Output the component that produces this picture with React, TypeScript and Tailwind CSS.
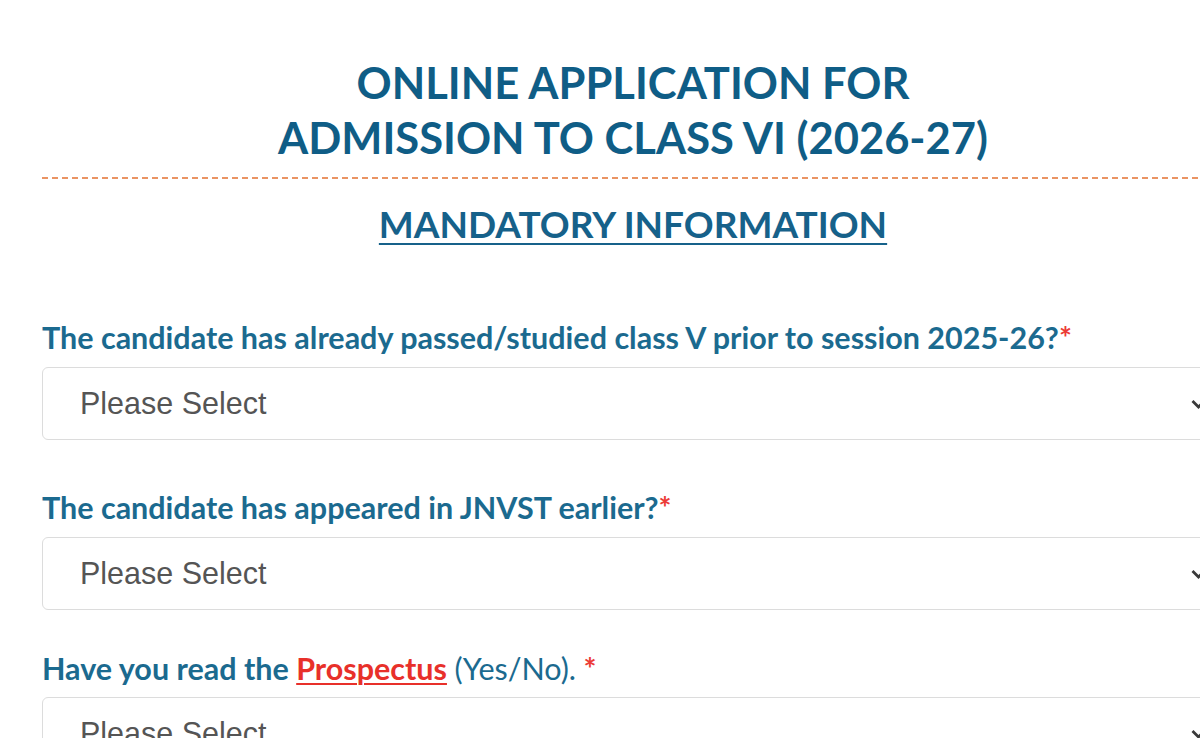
import React from "react";

const Req = () => <span className="text-[#ec3b36]">*</span>;

const SelectBox: React.FC<{ className?: string }> = ({ className = "" }) => (
  <div
    className={`relative flex h-[73px] items-center rounded-[6px] border border-[#dcdcdc] bg-white pl-[37px] ${className}`}
  >
    <span className="font-['Liberation_Sans',Arial,sans-serif] text-[30.5px] text-[#555]">Please Select</span>
    {/* chevron */}
    <svg
      className="absolute right-[17px] top-1/2 h-[10px] w-[15px] -translate-y-1/2"
      viewBox="0 0 15 10"
      fill="none"
      stroke="#3a3a3a"
      strokeWidth={2.8}
    >
      <path d="M1.5 2l6 6 6-6" />
    </svg>
  </div>
);

export default function App() {
  return (
    <div className="h-[738px] w-[1200px] overflow-hidden bg-white font-['Lato',sans-serif]">
      <div className="ml-[42px] w-[1182px] pt-[55px]">
        {/* Title */}
        <h1 className="text-center text-[43.5px] font-bold leading-[55px] text-[#0f5d86]">
          ONLINE APPLICATION FOR
          <br />
          ADMISSION TO CLASS VI (2026-27)
        </h1>

        {/* dashed rule */}
        <div className="mt-[12px] h-[2px] bg-[repeating-linear-gradient(to_right,#ea9463_0_6px,transparent_6px_10px)]" />

        <h2 className="mt-[25px] text-center text-[37px] font-bold leading-[40px] text-[#16618a] underline decoration-[2px] underline-offset-[5px]">
          MANDATORY INFORMATION
        </h2>

        {/* Questions */}
        <label className="mt-[75px] block text-[30.5px] font-bold leading-[36px] text-[#1b6a8f]">
          The candidate has already passed/studied class V prior to session 2025-26?
          <Req />
        </label>
        <SelectBox className="mt-[12px]" />

        <label className="mt-[49px] block text-[30.5px] font-bold leading-[36px] text-[#1b6a8f]">
          The candidate has appeared in JNVST earlier?
          <Req />
        </label>
        <SelectBox className="mt-[12px]" />

        <label className="mt-[40px] block text-[30.5px] font-bold leading-[36px] text-[#1b6a8f]">
          Have you read the{" "}
          <a className="text-[#e8302a] underline decoration-[2px] underline-offset-[3px]">Prospectus</a>{" "}
          <span className="font-normal">(Yes/No).</span> <Req />
        </label>
        <SelectBox className="mt-[11px]" />
      </div>
    </div>
  );
}
